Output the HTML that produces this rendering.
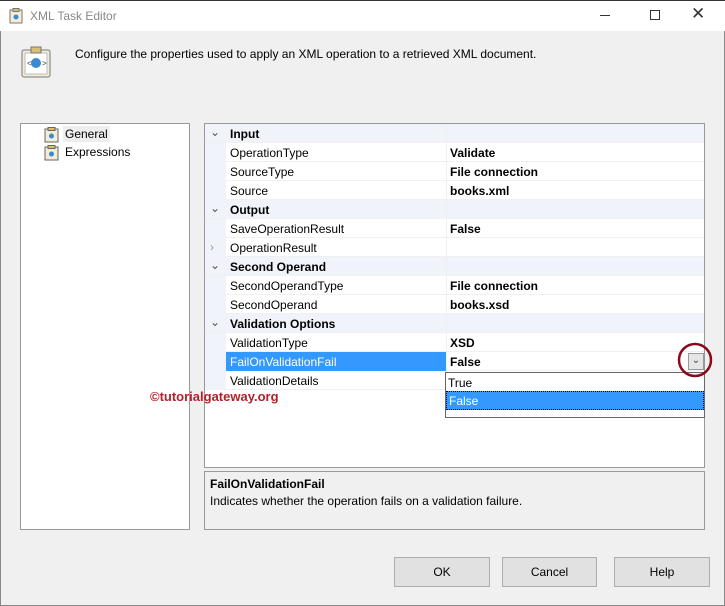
<!DOCTYPE html>
<html><head><style>
*{margin:0;padding:0;box-sizing:border-box}
body{width:725px;height:606px;background:#f0f0f0;font-family:"Liberation Sans",sans-serif;font-size:12px;color:#000;position:relative;overflow:hidden}
.abs{position:absolute}
#title{position:absolute;left:0;top:0;width:725px;height:31px;background:#fff;border-top:1px solid #333}
.btn{position:absolute;top:557px;height:30px;background:#e1e1e1;border:1px solid #adadad;text-align:center;line-height:28px;font-size:12px}
.row{position:absolute;left:0;width:499px;height:19px;border-bottom:1px solid #f0f0f0}
.cat{background:#f0f3f9;font-weight:bold}
.nm{position:absolute;left:25px;top:3px}
.vl{position:absolute;left:246px;top:3px;font-weight:bold}
</style></head><body>
<div class="abs" style="left:0;top:0;width:725px;height:606px;border:1px solid #888;border-top:none"></div>
<div id="title">
  <svg class="abs" style="left:9px;top:7px" width="14" height="16"><rect x="1" y="2" width="12" height="13" fill="#f3ecd8" stroke="#777"/><rect x="4" y="0.5" width="6" height="3" fill="#d8c070" stroke="#777"/><circle cx="7" cy="9" r="2.5" fill="#3a8ad0"/></svg>
  <div class="abs" style="left:30px;top:8px;font-size:12px;color:#888">XML Task Editor</div>
  <div class="abs" style="left:600px;top:14px;width:10px;height:1px;background:#333"></div>
  <div class="abs" style="left:650px;top:9px;width:10px;height:10px;border:1px solid #333"></div>
  <div class="abs" style="left:691px;top:3px;font-size:17px;color:#333">✕</div>
</div>
<svg class="abs" style="left:20px;top:46px" width="32" height="32"><rect x="2" y="4" width="28" height="27" rx="2" fill="#f3ecd8" stroke="#777"/><rect x="5" y="7" width="22" height="21" fill="#fff" stroke="#bbb"/><rect x="11" y="1" width="10" height="6" fill="#d8c070" stroke="#777"/><circle cx="16" cy="17" r="5" fill="#3a8ad0"/><text x="7" y="20" font-size="8" fill="#444">&lt;</text><text x="22" y="20" font-size="8" fill="#444">&gt;</text></svg>
<div class="abs" style="left:75px;top:47px;font-size:12px">Configure the properties used to apply an XML operation to a retrieved XML document.</div>

<div class="abs" style="left:20px;top:123px;width:170px;height:407px;background:#fff;border:1px solid #999">
  <svg class="abs" style="left:23px;top:3px" width="16" height="16"><rect x="1" y="2" width="13" height="13" fill="#f3ecd8" stroke="#666"/><rect x="4" y="0.5" width="7" height="3" fill="#d8c070" stroke="#666"/><circle cx="7.5" cy="9" r="2.5" fill="#3a8ad0"/></svg>
  <div class="abs" style="left:42px;top:2px;background:#eee;padding:1px 2px">General</div>
  <svg class="abs" style="left:23px;top:21px" width="16" height="16"><rect x="1" y="2" width="13" height="13" fill="#f3ecd8" stroke="#666"/><rect x="4" y="0.5" width="7" height="3" fill="#d8c070" stroke="#666"/><circle cx="7.5" cy="9" r="2.5" fill="#3a8ad0"/></svg>
  <div class="abs" style="left:44px;top:21px">Expressions</div>
</div>

<div class="abs" style="left:204px;top:123px;width:501px;height:345px;background:#fff;border:1px solid #999;overflow:visible">
  <div class="abs" style="left:0;top:0;width:21px;height:266px;background:#f0f3f9"></div>
  <div class="row cat" style="top:0"><span class="abs" style="left:5px;top:1px;color:#555;font-weight:normal">⌄</span><span class="nm">Input</span></div>
  <div class="row" style="top:19px;left:21px;width:478px"><span class="nm" style="left:4px">OperationType</span><span class="vl" style="left:224px">Validate</span></div>
  <div class="row" style="top:38px;left:21px;width:478px"><span class="nm" style="left:4px">SourceType</span><span class="vl" style="left:224px">File connection</span></div>
  <div class="row" style="top:57px;left:21px;width:478px"><span class="nm" style="left:4px">Source</span><span class="vl" style="left:224px">books.xml</span></div>
  <div class="row cat" style="top:76px"><span class="abs" style="left:5px;top:1px;color:#555;font-weight:normal">⌄</span><span class="nm">Output</span></div>
  <div class="row" style="top:95px;left:21px;width:478px"><span class="nm" style="left:4px">SaveOperationResult</span><span class="vl" style="left:224px">False</span></div>
  <div class="row" style="top:114px;left:21px;width:478px"><span class="abs" style="left:-16px;top:2px;color:#999">›</span><span class="nm" style="left:4px">OperationResult</span></div>
  <div class="row cat" style="top:133px"><span class="abs" style="left:5px;top:1px;color:#555;font-weight:normal">⌄</span><span class="nm">Second Operand</span></div>
  <div class="row" style="top:152px;left:21px;width:478px"><span class="nm" style="left:4px">SecondOperandType</span><span class="vl" style="left:224px">File connection</span></div>
  <div class="row" style="top:171px;left:21px;width:478px"><span class="nm" style="left:4px">SecondOperand</span><span class="vl" style="left:224px">books.xsd</span></div>
  <div class="row cat" style="top:190px"><span class="abs" style="left:5px;top:1px;color:#555;font-weight:normal">⌄</span><span class="nm">Validation Options</span></div>
  <div class="row" style="top:209px;left:21px;width:478px"><span class="nm" style="left:4px">ValidationType</span><span class="vl" style="left:224px">XSD</span></div>
  <div class="row" style="top:228px;left:21px;width:478px"><div class="abs" style="left:0;top:0;width:220px;height:19px;background:#3399ff"></div><span class="nm" style="left:4px;color:#fff">FailOnValidationFail</span><span class="vl" style="left:224px">False</span>
    <div class="abs" style="left:462px;top:1px;width:16px;height:17px;background:#e5e5e5;border:1px solid #999;text-align:center;font-size:10px;line-height:14px;color:#444">⌄</div></div>
  <div class="row" style="top:247px;left:21px;width:478px"><span class="nm" style="left:4px">ValidationDetails</span></div>
  <div class="abs" style="left:241px;top:0;width:1px;height:266px;background:#f0f0f0"></div>
  <div class="abs" style="left:240px;top:248px;width:260px;height:46px;background:#fff;border:1px solid #666">
    <div class="abs" style="left:2px;top:3px">True</div>
    <div class="abs" style="left:0;top:18px;width:258px;height:19px;background:#3399ff;color:#fff;padding:2px 2px;border:1px dotted #003">False</div>
  </div>
</div>
<svg class="abs" style="left:675px;top:341px" width="40" height="40"><circle cx="20" cy="19" r="16" fill="none" stroke="#8b0a1a" stroke-width="2.5"/></svg>
<div class="abs" style="left:150px;top:389px;font-size:13px;font-weight:bold;color:#b5202a">©tutorialgateway.org</div>

<div class="abs" style="left:204px;top:471px;width:501px;height:59px;border:1px solid #999;background:#f0f0f0">
  <div class="abs" style="left:5px;top:5px;font-weight:bold">FailOnValidationFail</div>
  <div class="abs" style="left:5px;top:22px">Indicates whether the operation fails on a validation failure.</div>
</div>

<div class="btn" style="left:394px;width:96px">OK</div>
<div class="btn" style="left:502px;width:95px">Cancel</div>
<div class="btn" style="left:614px;width:96px">Help</div>
</body></html>
